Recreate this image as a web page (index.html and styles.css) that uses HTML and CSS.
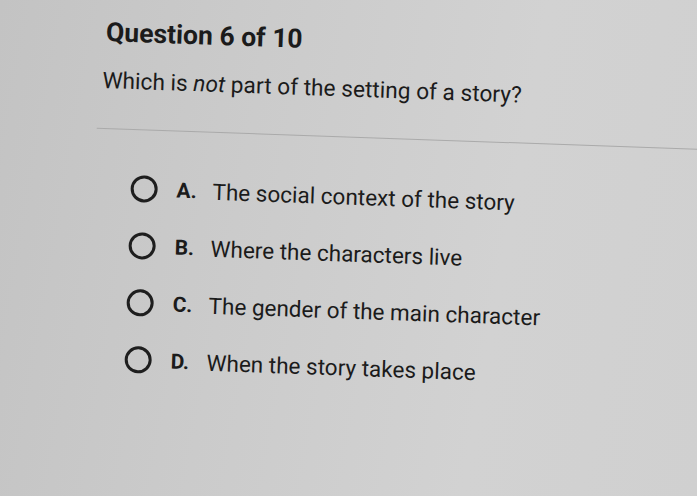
FILE: index.html
```html
<!DOCTYPE html>
<html>
<head>
<meta charset="utf-8">
<link rel="stylesheet" href="styles.css">
</head>
<body>
<div class="screen">
  <div class="quiz">
    <h1 class="title">Question 6 of 10</h1>
    <p class="prompt">Which is <em>not</em> part of the setting of a story?</p>
    <div class="divider"></div>
    <ul class="options">
      <li class="option"><span class="radio"></span><span class="letter">A.</span><span class="text">The social context of the story</span></li>
      <li class="option"><span class="radio"></span><span class="letter">B.</span><span class="text">Where the characters live</span></li>
      <li class="option"><span class="radio"></span><span class="letter">C.</span><span class="text">The gender of the main character</span></li>
      <li class="option"><span class="radio"></span><span class="letter">D.</span><span class="text">When the story takes place</span></li>
    </ul>
  </div>
</div>
</body>
</html>
```

FILE: styles.css
```css
html, body {
  margin: 0;
  padding: 0;
  width: 697px;
  height: 496px;
  overflow: hidden;
}
.screen {
  width: 697px;
  height: 496px;
  overflow: hidden;
  background: linear-gradient(100deg, #c3c3c3 0%, #cbcbcb 35%, #d2d2d2 70%, #d0d0d0 100%);
  font-family: Roboto, "Liberation Sans", sans-serif;
  color: #1b1b1b;
}
.quiz {
  padding: 17px 0 0 106px;
  transform-origin: 106px 35px;
  transform: rotate(2deg);
}
.title {
  margin: 0;
  font-size: 26.5px;
  font-weight: 700;
  line-height: 30px;
}
.prompt {
  margin: 20px 0 0 -2px;
  font-size: 22.7px;
  line-height: 28px;
}
.prompt em {
  font-style: italic;
}
.divider {
  margin: 33px 0 0 -6px;
  height: 1px;
  width: 700px;
  background: #aaaaaa;
}
.options {
  list-style: none;
  margin: 45px 0 0 0;
  padding: 0 0 0 30px;
  display: flex;
  flex-direction: column;
  gap: 30px;
}
.option {
  display: flex;
  align-items: center;
  height: 27px;
  font-size: 22.5px;
}
.radio {
  box-sizing: border-box;
  width: 27px;
  height: 27px;
  border: 3px solid #1e1e1e;
  border-radius: 50%;
  flex: none;
}
.letter {
  font-weight: 700;
  margin-left: 19px;
  width: 36px;
  font-size: 21px;
}
.text {
  white-space: nowrap;
}
```
